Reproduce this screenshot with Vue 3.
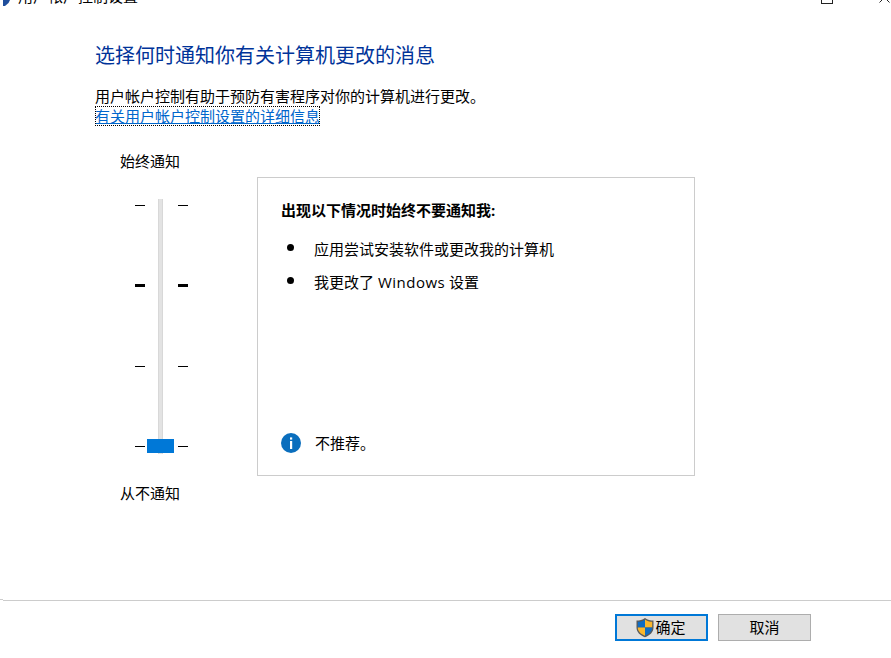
<script setup>
const ticks = [
  { id: 1, top: 205, thick: false },
  { id: 2, top: 285, thick: true },
  { id: 3, top: 366, thick: false },
  { id: 4, top: 446, thick: false },
]
</script>

<template>
  <div class="page">
    <header class="titlebar">
      <svg class="app-icon" width="11" height="6" viewBox="0 0 11 6">
        <path d="M3 0H10L8.5 3L5 6H3Z" fill="#1f4e9c" />
      </svg>
      <span class="title">用户帐户控制设置</span>
      <span class="max-btn"></span>
      <svg class="close-btn" width="11" height="4" viewBox="0 0 11 4">
        <path d="M0.5 3.5L4 0M10.5 3.5L7 0" stroke="#222" stroke-width="1" fill="none" />
      </svg>
    </header>

    <main class="content">
      <h1 class="heading">选择何时通知你有关计算机更改的消息</h1>
      <p class="intro">用户帐户控制有助于预防有害程序对你的计算机进行更改。</p>
      <a class="link">有关用户帐户控制设置的详细信息</a>

      <div class="settings">
        <div class="slider-col">
          <div class="slider-label">始终通知</div>
          <div class="slider">
            <div class="track"></div>
            <div class="thumb"></div>
            <template v-for="t in ticks" :key="t.id">
              <i class="tick left" :class="{ thick: t.thick }" :style="{ top: t.top - 178 + 'px' }"></i>
              <i class="tick right" :class="{ thick: t.thick }" :style="{ top: t.top - 178 + 'px' }"></i>
            </template>
          </div>
          <div class="slider-label bottom">从不通知</div>
        </div>

        <section class="panel">
          <div class="panel-title">出现以下情况时始终不要通知我:</div>
          <ul class="items">
            <li>应用尝试安装软件或更改我的计算机</li>
            <li>我更改了 <span class="latin">Windows</span> 设置</li>
          </ul>
          <div class="note">
            <svg class="info" width="20" height="20" viewBox="0 0 20 20">
              <circle cx="10" cy="10" r="10" fill="#0a6ebd" />
              <rect x="9" y="8" width="2.2" height="8" fill="#fff" />
              <rect x="9" y="4.4" width="2.2" height="2.2" fill="#fff" />
            </svg>
            <span>不推荐。</span>
          </div>
        </section>
      </div>
    </main>

    <footer class="footer">
      <button class="btn primary">
        <svg class="shield" width="20" height="21" viewBox="0 0 20 21">
          <path d="M10 1C7.5 3 4.5 3.6 1.5 3.6V10.5C1.5 15 5 18.5 10 20.2C15 18.5 18.5 15 18.5 10.5V3.6C15.5 3.6 12.5 3 10 1Z" fill="#5a5a5a" />
          <path d="M10 2.4V10.6H2.8V4.8C5.5 4.7 8 4 10 2.4Z" fill="#0f6cc4" />
          <path d="M10 2.4C12 4 14.5 4.7 17.2 4.8V10.6H10Z" fill="#fbb72c" />
          <path d="M2.8 10.6H10V18.8C5.8 17.3 2.8 14.4 2.8 10.6Z" fill="#fbb72c" />
          <path d="M10 10.6H17.2C17.2 14.4 14.2 17.3 10 18.8Z" fill="#0f6cc4" />
        </svg>
        <span>确定</span>
      </button>
      <button class="btn">取消</button>
    </footer>
  </div>
</template>

<style>
html, body { margin: 0; background: #fff; }
</style>

<style scoped>
.page {
  width: 891px;
  height: 658px;
  display: flex;
  flex-direction: column;
  overflow: hidden;
  background: #fff;
  color: #000;
  font-family: "Open Sans", "Noto Sans CJK SC", sans-serif;
  font-size: 15px;
}
.titlebar {
  height: 6px;
  flex: none;
  display: flex;
  align-items: flex-end;
  overflow: hidden;
}
.app-icon { flex: none; margin-right: 7px; }
.title {
  font-size: 15px;
  line-height: 22px;
  margin-bottom: -1px;
  white-space: nowrap;
  height: 22px;
  flex: none;
}
.max-btn {
  width: 10px;
  height: 10px;
  border: 1px solid #222;
  flex: none;
  margin-left: auto;
  margin-right: 46px;
  align-self: flex-start;
  margin-top: -8px;
}
.close-btn { flex: none; margin-right: 1px; align-self: flex-start; margin-top: -1px; }
.content {
  flex: 1;
  padding-left: 95px;
  display: flex;
  flex-direction: column;
  align-items: flex-start;
}
.heading {
  margin: 36px 0 0;
  font-size: 20px;
  font-weight: 400;
  line-height: 28px;
  color: #003399;
}
.intro { margin: 17px 0 0; line-height: 19px; height: 19px; }
.link {
  color: #0066cc;
  text-decoration: underline;
  line-height: 20px;
  outline: 1px dotted #000;
  outline-offset: -1px;
  margin-top: 0;
}
.settings {
  display: flex;
  align-items: flex-start;
  margin-top: 51px;
}
.slider-col { width: 162px; margin-top: -26px; flex: none; padding-left: 25px; box-sizing: border-box; }
.slider-label { line-height: 20px; height: 20px; }
.slider-label.bottom { margin-top: 6px; }
.slider {
  position: relative;
  height: 299px;
  margin-top: 7px;
}
.track {
  position: absolute;
  left: 38px;
  top: 21px;
  width: 3px;
  height: 255px;
  background: #e3e3e3;
  border: 1px solid #d8d8d8;
  border-width: 0 1px;
}
.thumb {
  position: absolute;
  left: 27px;
  top: 261px;
  width: 27px;
  height: 14px;
  background: #0078d7;
}
.tick {
  position: absolute;
  width: 10px;
  height: 1px;
  background: #000;
}
.tick.thick { height: 3px; margin-top: -1px; }
.tick.left { left: 15px; }
.tick.right { left: 58px; }
.panel {
  width: 438px;
  height: 299px;
  box-sizing: border-box;
  border: 1px solid #cccccc;
  padding: 22px 23px 0;
  display: flex;
  flex-direction: column;
  flex: none;
}
.panel-title { font-weight: 700; line-height: 20px; }
.items {
  list-style: none;
  margin: 19px 0 0;
  padding: 0;
}
.items li {
  position: relative;
  padding-left: 33px;
  line-height: 20px;
  margin-bottom: 13px;
}
.items li::before {
  content: "";
  position: absolute;
  left: 6px;
  top: 5px;
  width: 7px;
  height: 7px;
  border-radius: 50%;
  background: #000;
}
.latin { letter-spacing: 0.5px; }
.note {
  display: flex;
  align-items: center;
  gap: 14px;
  margin-bottom: 22px;
  margin-top: auto;
}
.info { flex: none; }
.footer {
  height: 58px;
  flex: none;
  box-sizing: border-box;
  border-top: 1px solid #cccccc;
  margin-left: 3px;
  padding: 13px 80px 0 0;
  display: flex;
  justify-content: flex-end;
  align-items: flex-start;
  gap: 10px;
  position: relative;
}
.footer::before {
  content: "";
  position: absolute;
  left: -3px;
  top: -2px;
  width: 3px;
  height: 1px;
  background: #cccccc;
}
.btn {
  width: 93px;
  height: 27px;
  box-sizing: border-box;
  padding: 0;
  border: 1px solid #adadad;
  background: #e1e1e1;
  font: inherit;
  color: #000;
  line-height: 1;
  display: flex;
  align-items: center;
  justify-content: center;
}
.btn.primary { border: 2px solid #0078d7; }
.shield { flex: none; margin-left: -2px; }
</style>
